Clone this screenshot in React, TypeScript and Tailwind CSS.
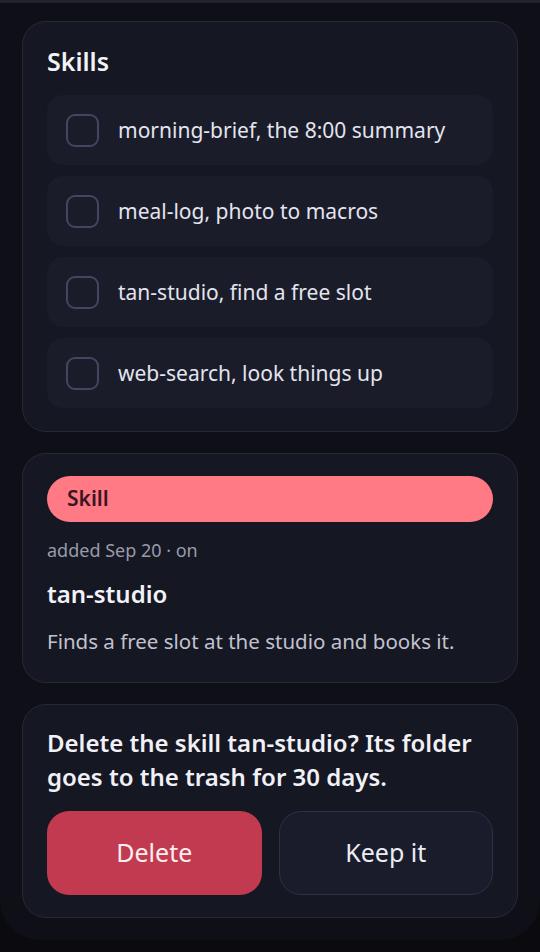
import React from 'react';

const skills = [
  'morning-brief, the 8:00 summary',
  'meal-log, photo to macros',
  'tan-studio, find a free slot',
  'web-search, look things up',
];

const SkillRow = ({ label }: { label: string }) => (
  <div className="flex h-[70px] items-center gap-[19px] rounded-2xl bg-[#1a1c2a] px-[19px]">
    <div className="h-[33px] w-[33px] shrink-0 rounded-[9px] border-2 border-[#434660]" />
    <span className="text-[21px] leading-[28px] text-[#e4e4ee]">{label}</span>
  </div>
);

export default function App() {
  return (
    <div className="min-h-[952px] bg-[#0a0a0f]" style={{ fontFamily: '"Noto Sans", Lato, sans-serif' }}>
      <div className="flex h-[940px] flex-col gap-[21px] rounded-b-[40px] border-t-[3px] border-[#22232e] bg-[#0f1017] px-[22px] pt-[18px]">
        <section className="flex flex-col rounded-[24px] border border-[#262837] bg-[#151723] px-6 pb-[23px] pt-[22px]">
          <h2 className="mb-[17px] text-[25px] font-semibold leading-[34px] text-[#f2f2f7]">Skills</h2>
          <div className="flex flex-col gap-[11px]">
            {skills.map((s) => (
              <SkillRow key={s} label={s} />
            ))}
          </div>
        </section>

        <section className="flex flex-col rounded-[24px] border border-[#262837] bg-[#151723] px-6 pb-[26px] pt-[22px]">
          <div className="flex h-[46px] items-center rounded-full bg-[#ff7a85] px-5 text-[21px] font-semibold text-[#3b1522]">Skill</div>
          <p className="mt-[15px] text-[18px] leading-[26px] text-[#9a9aab]">added Sep 20 · on</p>
          <h3 className="mt-[15px] text-[24px] font-semibold leading-[32px] text-[#f2f2f7]">tan-studio</h3>
          <p className="mt-[16px] text-[20.5px] leading-[30px] text-[#c2c2cf]">Finds a free slot at the studio and books it.</p>
        </section>

        <section className="flex flex-col rounded-[24px] border border-[#262837] bg-[#151723] px-6 pb-[22px] pt-[21px]">
          <p className="text-[24px] font-semibold leading-[34px] text-[#f0f0f6]">
            Delete the skill tan-studio? Its folder goes to the trash for 30 days.
          </p>
          <div className="mt-[17px] grid grid-cols-2 gap-[17px]">
            <button className="h-[84px] rounded-[22px] bg-[#c23a4f] text-[25px] text-[#fbeef0]">Delete</button>
            <button className="h-[84px] rounded-[22px] border border-[#2e3044] bg-[#1a1c2b] text-[25px] text-[#ececf3]">Keep it</button>
          </div>
        </section>
      </div>
    </div>
  );
}
